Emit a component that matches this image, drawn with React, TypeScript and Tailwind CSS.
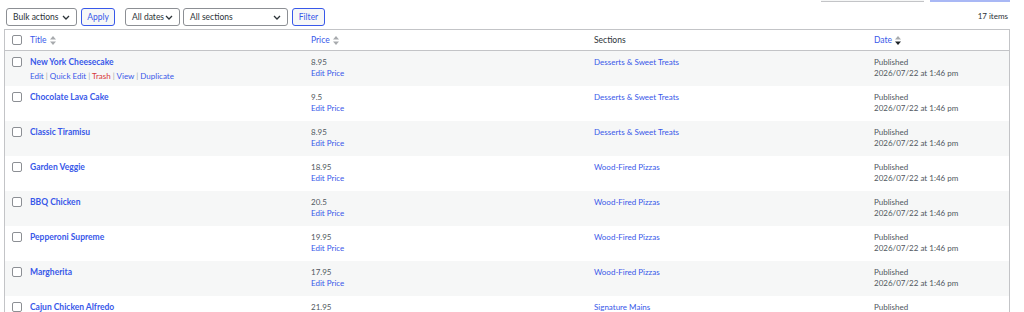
import React from "react";

const rows = [
  { title: "New York Cheesecake", price: "8.95", section: "Desserts & Sweet Treats", actions: true },
  { title: "Chocolate Lava Cake", price: "9.5", section: "Desserts & Sweet Treats" },
  { title: "Classic Tiramisu", price: "8.95", section: "Desserts & Sweet Treats" },
  { title: "Garden Veggie", price: "18.95", section: "Wood-Fired Pizzas" },
  { title: "BBQ Chicken", price: "20.5", section: "Wood-Fired Pizzas" },
  { title: "Pepperoni Supreme", price: "19.95", section: "Wood-Fired Pizzas" },
  { title: "Margherita", price: "17.95", section: "Wood-Fired Pizzas" },
  { title: "Cajun Chicken Alfredo", price: "21.95", section: "Signature Mains" },
];

const cols = "grid grid-cols-[20px_281px_283px_280px_1fr]";

const Check = () => (
  <span className="block w-[10px] h-[10px] border border-[#8c8f94] rounded-[2px] bg-white" />
);

const Sort = ({ active }: { active?: boolean }) => (
  <svg width="6" height="9" viewBox="0 0 6 9" className="ml-[3px]">
    <path d="M3 0L6 3.5H0z" fill="#a7aaad" />
    <path d="M3 9L6 5.5H0z" fill={active ? "#1d2327" : "#a7aaad"} />
  </svg>
);

const Chevron = () => (
  <svg width="8" height="5" viewBox="0 0 8 5" fill="none">
    <path d="M1 1l3 3 3-3" stroke="#2c3338" strokeWidth="1.3" />
  </svg>
);

const Select = ({ label, w }: { label: string; w: string }) => (
  <div className={`${w} h-[18px] flex items-center justify-between px-[6px] border border-[#8c8f94] rounded-[3px] bg-white text-[#2c3338]`}>
    <span>{label}</span>
    <Chevron />
  </div>
);

const Button = ({ label, w }: { label: string; w: string }) => (
  <div className={`${w} h-[18px] flex items-center justify-center border border-[#3858e9] rounded-[3px] bg-[#f6f7f7] text-[#3858e9]`}>
    {label}
  </div>
);

const Sep = () => <span className="text-[#a7aaad]">|</span>;

export default function App() {
  return (
    <div className="w-[1024px] h-[312px] overflow-hidden bg-white text-[8px] leading-[11px] text-[#50575e] font-['Lato',sans-serif]">
      <div className="flex h-[2px] pl-[821px]">
        <div className="w-[103px] h-[2px] border-b border-[#c3c4c7] bg-[#f6f7f7]" />
        <div className="w-[80px] h-[2px] ml-[6px] border-b-2 border-[#a9b8f5] bg-[#eef1fd]" />
      </div>
      <div className="flex items-center pl-[6px] pr-[16px] mt-[6px] text-[8.5px]">
        <Select label="Bulk actions" w="w-[71px]" />
        <div className="ml-[4px]"><Button label="Apply" w="w-[34px]" /></div>
        <div className="ml-[10px]"><Select label="All dates" w="w-[55px]" /></div>
        <div className="ml-[3px]"><Select label="All sections" w="w-[105px]" /></div>
        <div className="ml-[4px]"><Button label="Filter" w="w-[33px]" /></div>
        <span className="ml-auto mt-[-1px] text-[#2c3338] text-[8px]">17 items</span>
      </div>
      <div className="ml-[4px] mr-[14px] mt-[3px] border border-[#c3c4c7]">
        <div className={`${cols} h-[21px] items-center border-b border-[#c3c4c7] text-[#2c3338] text-[8.5px]`}>
          <div className="pl-[7px]"><Check /></div>
          <div className="pl-[5px] flex items-center text-[#3858e9]">Title<Sort /></div>
          <div className="pl-[5px] flex items-center text-[#3858e9]">Price<Sort /></div>
          <div className="pl-[5px]">Sections</div>
          <div className="pl-[5px] flex items-center text-[#3858e9]">Date<Sort active /></div>
        </div>
        {rows.map((r, i) => (
          <div key={r.title} className={`${cols} h-[35px] pt-[6px] ${i % 2 === 0 ? "bg-[#f6f7f7]" : "bg-white"}`}>
            <div className="pl-[7px]"><Check /></div>
            <div className="pl-[5px]">
              <div className="font-bold text-[8.5px] text-[#3858e9]">{r.title}</div>
              {r.actions && (
                <div className="mt-[3px] text-[#3858e9]">
                  Edit <Sep /> Quick Edit <Sep /> <span className="text-[#d63638]">Trash</span> <Sep /> View{" "}
                  <Sep /> Duplicate
                </div>
              )}
            </div>
            <div className="pl-[5px]">
              <div>{r.price}</div>
              <div className="text-[#3858e9]">Edit Price</div>
            </div>
            <div className="pl-[5px] text-[#3858e9]">{r.section}</div>
            <div className="pl-[5px]">
              <div>Published</div>
              <div>2026/07/22 at 1:46 pm</div>
            </div>
          </div>
        ))}
      </div>
    </div>
  );
}
